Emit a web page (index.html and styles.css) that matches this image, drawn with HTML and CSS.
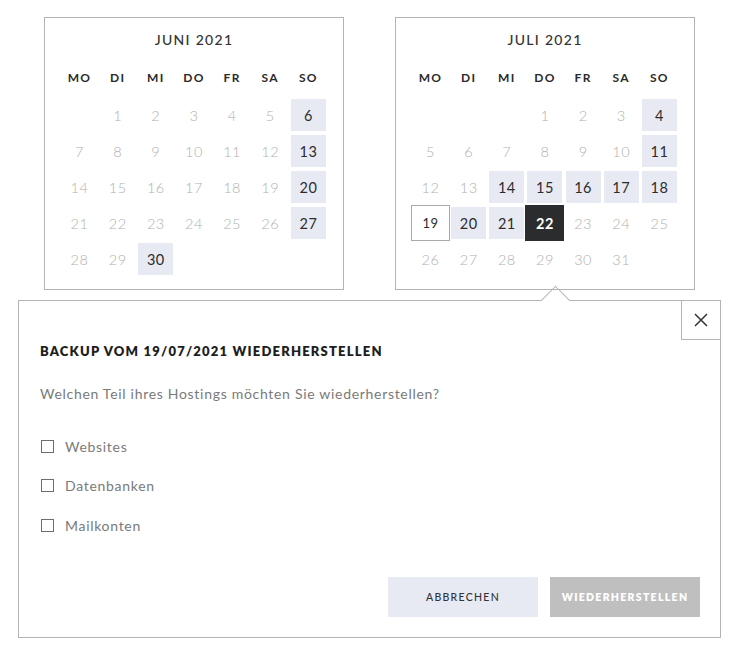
FILE: index.html
```html
<!DOCTYPE html>
<html lang="de">
<head>
<meta charset="utf-8">
<link rel="stylesheet" href="styles.css">
</head>
<body>
<div class="page">
  <div class="calendars">
    <div class="cal">
      <div class="cal-title">JUNI 2021</div>
      <div class="grid weekdays">
        <span>MO</span><span>DI</span><span>MI</span><span>DO</span><span>FR</span><span>SA</span><span>SO</span>
      </div>
      <div class="grid days">
        <span></span><span class="d">1</span><span class="d">2</span><span class="d">3</span><span class="d">4</span><span class="d">5</span><span class="d on">6</span>
        <span class="d">7</span><span class="d">8</span><span class="d">9</span><span class="d">10</span><span class="d">11</span><span class="d">12</span><span class="d on">13</span>
        <span class="d">14</span><span class="d">15</span><span class="d">16</span><span class="d">17</span><span class="d">18</span><span class="d">19</span><span class="d on">20</span>
        <span class="d">21</span><span class="d">22</span><span class="d">23</span><span class="d">24</span><span class="d">25</span><span class="d">26</span><span class="d on">27</span>
        <span class="d">28</span><span class="d">29</span><span class="d on">30</span>
      </div>
    </div>
    <div class="cal">
      <div class="cal-title">JULI 2021</div>
      <div class="grid weekdays">
        <span>MO</span><span>DI</span><span>MI</span><span>DO</span><span>FR</span><span>SA</span><span>SO</span>
      </div>
      <div class="grid days">
        <span></span><span></span><span></span><span class="d">1</span><span class="d">2</span><span class="d">3</span><span class="d on">4</span>
        <span class="d">5</span><span class="d">6</span><span class="d">7</span><span class="d">8</span><span class="d">9</span><span class="d">10</span><span class="d on">11</span>
        <span class="d">12</span><span class="d">13</span><span class="d on">14</span><span class="d on">15</span><span class="d on">16</span><span class="d on">17</span><span class="d on">18</span>
        <span class="d sel">19</span><span class="d on">20</span><span class="d on">21</span><span class="d today">22</span><span class="d">23</span><span class="d">24</span><span class="d">25</span>
        <span class="d">26</span><span class="d">27</span><span class="d">28</span><span class="d">29</span><span class="d">30</span><span class="d">31</span>
      </div>
    </div>
  </div>

  <div class="popup">
    <div class="arrow"></div>
    <button class="close" aria-label="Schließen">
      <svg width="14" height="14" viewBox="0 0 14 14"><path d="M1 1 L13 13 M13 1 L1 13" stroke="#333" stroke-width="1.5" fill="none"/></svg>
    </button>
    <h2 class="popup-title">BACKUP VOM 19/07/2021 WIEDERHERSTELLEN</h2>
    <p class="popup-text">Welchen Teil ihres Hostings möchten Sie wiederherstellen?</p>
    <div class="options">
      <label class="opt"><span class="box"></span>Websites</label>
      <label class="opt"><span class="box"></span>Datenbanken</label>
      <label class="opt"><span class="box"></span>Mailkonten</label>
    </div>
    <div class="actions">
      <button class="btn btn-cancel">ABBRECHEN</button>
      <button class="btn btn-restore">WIEDERHERSTELLEN</button>
    </div>
  </div>
</div>
</body>
</html>
```

FILE: styles.css
```css
* { box-sizing: border-box; }
html, body { margin: 0; padding: 0; background: #fff; }
body { font-family: Lato, "Open Sans", sans-serif; color: #333; }

.page { padding-top: 17px; }

.calendars {
  display: flex;
  gap: 51px;
  padding-left: 44px;
  position: relative;
  z-index: 2;
}

.cal {
  width: 300px;
  border: 1px solid #b3b3b3;
  padding: 13px 17px 14px 17px;
}

.cal-title {
  text-align: center;
  font-size: 14px;
  line-height: 18px;
  font-weight: 500;
  letter-spacing: 1.3px;
  color: #333;
}

.grid {
  display: grid;
  grid-template-columns: repeat(7, 35px);
  justify-content: space-between;
}

.weekdays {
  margin-top: 20px;
  font-size: 12px;
  line-height: 18px;
  font-weight: 700;
  letter-spacing: 1.3px;
  text-align: center;
  color: #2a2a2a;
}

.days {
  margin-top: 12px;
  row-gap: 4px;
  grid-auto-rows: 32px;
}

.d {
  display: flex;
  align-items: center;
  justify-content: center;
  font-size: 14.5px;
  font-weight: 300;
  color: #b0b0b0;
  letter-spacing: 0.5px;
}

.d.on {
  background: #e8eaf3;
  color: #2d2d2d;
  font-weight: 400;
}

.d.sel {
  color: #2d2d2d;
  font-size: 13px;
  font-weight: 400;
  outline: 1px solid #aaa;
  outline-offset: 1px;
}

.d.today {
  background: #2b2c2e;
  box-shadow: 0 0 0 2px #2b2c2e;
  color: #fff;
  font-weight: 700;
}

.popup {
  position: relative;
  margin: 10px 0 0 18px;
  width: 703px;
  height: 338px;
  border: 1px solid #b3b3b3;
  padding: 42px 20px 20px 21px;
  display: flex;
  flex-direction: column;
  background: #fff;
}

.arrow {
  position: absolute;
  left: 526px;
  top: -11.5px;
  width: 21px;
  height: 21px;
  background: #fff;
  border-top: 1px solid #b3b3b3;
  border-left: 1px solid #b3b3b3;
  transform: rotate(45deg);
}

.close {
  position: absolute;
  top: -1px;
  right: -1px;
  width: 40px;
  height: 40px;
  border: 1px solid #b3b3b3;
  background: #fff;
  padding: 0;
  display: flex;
  align-items: center;
  justify-content: center;
  cursor: pointer;
}

.popup-title {
  margin: 0;
  font-size: 13px;
  line-height: 16px;
  font-weight: 800;
  letter-spacing: 1.2px;
  color: #1e1e1e;
}

.popup-text {
  margin: 26px 0 0;
  font-size: 14px;
  line-height: 18px;
  color: #7a7a7a;
  letter-spacing: 0.7px;
}

.options {
  margin-top: 33px;
  display: flex;
  flex-direction: column;
  gap: 19.5px;
}

.opt {
  display: flex;
  align-items: center;
  height: 20px;
  font-size: 14px;
  color: #7a7a7a;
  letter-spacing: 0.7px;
}

.box {
  width: 13px;
  height: 13px;
  border: 1px solid #6d6d6d;
  margin-left: 1px;
  margin-right: 11px;
}

.actions {
  margin-top: auto;
  display: flex;
  justify-content: flex-end;
  gap: 12px;
}

.btn {
  width: 150px;
  height: 40px;
  border: none;
  font-family: Lato, "Open Sans", sans-serif;
  font-size: 10.5px;
  letter-spacing: 1.3px;
  padding: 0;
}

.btn-cancel {
  background: #e8eaf3;
  color: #333;
  font-weight: 500;
}

.btn-restore {
  background: #bfbfbf;
  color: #fff;
  font-weight: 800;
}
```
